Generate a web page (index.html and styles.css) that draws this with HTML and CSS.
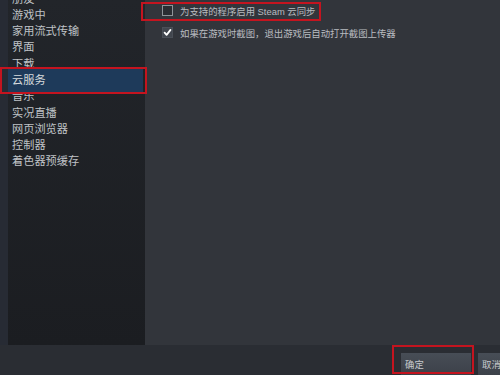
FILE: index.html
```html
<!DOCTYPE html>
<html lang="zh">
<head>
<meta charset="utf-8">
<link rel="stylesheet" href="styles.css">
</head>
<body>
<div class="window">
  <div class="main">
    <div class="edge"></div>
    <nav class="sidebar">
      <ul class="menu">
        <li class="item">朋友</li>
        <li class="item">游戏中</li>
        <li class="item">家用流式传输</li>
        <li class="item">界面</li>
        <li class="item">下载</li>
        <li class="item selected">云服务<span class="mark mark-side"></span></li>
        <li class="item">音乐</li>
        <li class="item">实况直播</li>
        <li class="item">网页浏览器</li>
        <li class="item">控制器</li>
        <li class="item">着色器预缓存</li>
      </ul>
    </nav>
    <section class="content">
      <label class="opt">
        <span class="box"></span>
        <span class="label">为支持的程序启用 Steam 云同步</span>
        <span class="mark mark-opt"></span>
      </label>
      <label class="opt">
        <span class="box checked"><svg viewBox="0 0 11 11" width="11" height="11"><path d="M2.6 5.7 L4.6 7.9 L8.5 2.9" fill="none" stroke="#ffffff" stroke-width="1.8" stroke-linecap="round" stroke-linejoin="round"/></svg></span>
        <span class="label">如果在游戏时截图，退出游戏后自动打开截图上传器</span>
      </label>
    </section>
  </div>
  <div class="footer">
    <button class="btn btn-ok">确定<span class="mark mark-btn"></span></button>
    <button class="btn btn-cancel">取消</button>
  </div>
</div>
</body>
</html>
```

FILE: styles.css
```css
* { box-sizing: border-box; }
html, body { margin: 0; padding: 0; }
body {
  width: 500px;
  height: 375px;
  overflow: hidden;
  background: #2a2d33;
  font-family: "Liberation Sans", "Noto Sans CJK SC", sans-serif;
}
.window {
  display: flex;
  flex-direction: column;
  height: 375px;
}
.main {
  display: flex;
  height: 345px;
}
.edge {
  width: 8px;
  background: #272b34;
}
.sidebar {
  width: 137px;
  background: linear-gradient(#22252a, #1b1d21);
  position: relative;
}
.menu {
  list-style: none;
  margin: -9.5px 0 0 0;
  padding: 0;
}
.item {
  height: 16.3px;
  line-height: 16.3px;
  padding-left: 4px;
  font-size: 11.2px;
  color: #bfc2c6;
  white-space: nowrap;
}
.item.selected {
  position: relative;
  height: 24px;
  line-height: 24px;
  margin: -3.85px 2px -3.85px 0;
  background: #1e3a5a;
  color: #d6dadd;
}
.mark {
  position: absolute;
  border: 2px solid #c4141f;
  pointer-events: none;
}
.mark-side {
  left: -8px;
  right: -4px;
  top: -1px;
  bottom: -2px;
}
.content {
  flex: 1;
  background: #32353b;
  padding: 5px 0 0 17px;
}
.opt {
  position: relative;
  display: flex;
  align-items: center;
  height: 11px;
  margin-bottom: 11px;
}
.box {
  width: 11px;
  height: 11px;
  border: 1px solid #8e9398;
  background: #2a2d32;
  flex: none;
  display: flex;
}
.box.checked {
  border-color: #4a4f57;
  background: #41464e;
}
.box svg { margin: -1px; }
.label {
  margin-left: 7px;
  font-size: 9.4px;
  color: #b9bcc0;
  white-space: nowrap;
}
.mark-opt {
  left: -21px;
  top: -3px;
  width: 180px;
  height: 19px;
}
.footer {
  height: 30px;
  display: flex;
  align-items: flex-start;
  padding: 8px 0 0 401px;
  gap: 7px;
  background: #2a2d33;
}
.btn {
  position: relative;
  height: 26px;
  border: none;
  margin: 0;
  padding: 0 0 4px 4px;
  text-align: left;
  font-family: "Liberation Sans", "Noto Sans CJK SC", sans-serif;
  font-size: 9.4px;
  color: #c6c9cc;
  background: linear-gradient(#474d56, #3a3f47);
  flex: none;
}
.btn-ok { width: 70px; }
.btn-cancel { width: 40px; }
.mark-btn {
  left: -9px;
  right: -3px;
  top: -8px;
  height: 29px;
}
```
